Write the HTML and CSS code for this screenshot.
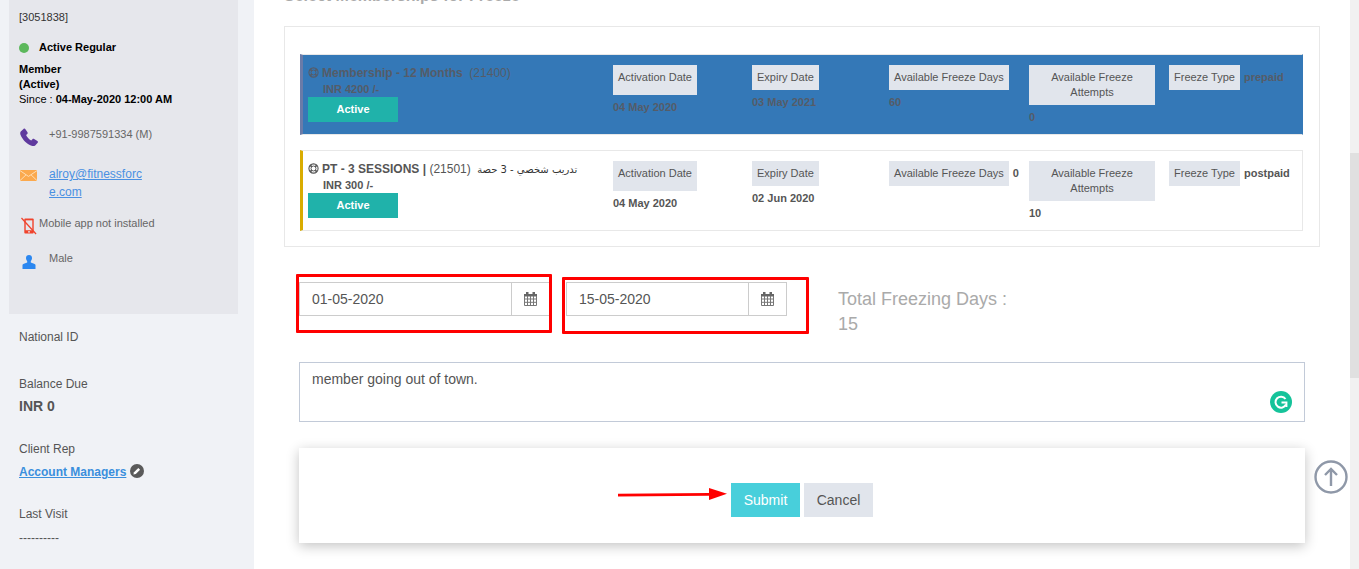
FILE: index.html
```html
<!DOCTYPE html>
<html lang="en">
<head>
<meta charset="utf-8">
<title>Freeze Membership</title>
<link rel="stylesheet" href="styles.css">
</head>
<body>
<div class="page">
  <aside class="sidebar">
    <div class="profile">
      <div class="member-id">[3051838]</div>
      <div class="status"><span class="dot"></span><b>Active Regular</b></div>
      <div class="member-type"><b>Member<br>(Active)</b><br>Since : <b>04-May-2020 12:00 AM</b></div>
      <div class="contact phone">
        <svg class="ic" viewBox="0 0 20 20"><path fill="#5f3a9e" d="M.8 3.800 3.700 1c.7-.6 1.500-.5 2 .2l2.200 3.200c.4.600.3 1.300-.2 1.800L6.400 7.400c.9 2.200 3 4.500 5.400 5.700l1.300-1.300c.5-.5 1.200-.5 1.800-.2l3.400 2c.7.500.8 1.300.3 1.900l-2.600 2.800c-.9.800-2.300 1-3.800.4C6.900 16.800 2.600 12 .6 7.300.1 6 .1 4.600.8 3.800z"/></svg>
        <span>+91-9987591334 (M)</span>
      </div>
      <div class="contact mail">
        <svg class="ic" viewBox="0 0 17 11"><rect width="17" height="11" fill="#fba94e"/><path fill="none" stroke="#ffe3bf" stroke-width=".9" d="M0 .6 8.500 6.400 17 .6M0 10.600 6 4.800M17 10.600 11 4.800"/></svg>
        <a href="#">alroy@fitnessforc<br>e.com</a>
      </div>
      <div class="contact app">
        <svg class="ic-app" viewBox="0 0 17 18"><rect x="3.500" y="1" width="10" height="16" rx="1" fill="#f0432c"/><rect x="5" y="3" width="7" height="10.500" fill="#e6e7ec"/><circle cx="8.500" cy="15.200" r="1" fill="#e6e7ec"/><path stroke="#f0432c" stroke-width="1.300" d="M.5.500 16 17.500"/></svg>
        <span>Mobile app not installed</span>
      </div>
      <div class="contact gender">
        <svg class="ic" viewBox="0 0 14 14"><path fill="#2b87f0" d="M7 0c1.900 0 3 1.300 3 3.100 0 1.300-.6 2.400-1.200 3.100v1.300c1.400.6 4 1.100 4.700 2.200V14H.5V9.700c.7-1.100 3.300-1.600 4.700-2.200V6.200C4.600 5.500 4 4.400 4 3.100 4 1.300 5.100 0 7 0z"/></svg>
        <span>Male</span>
      </div>
    </div>
    <div class="side-info">
      <div class="info national">National ID</div>
      <div class="info balance">Balance Due</div>
      <div class="amount">INR 0</div>
      <div class="info rep">Client Rep</div>
      <div class="managers"><a href="#">Account Managers</a>
        <svg class="edit" viewBox="0 0 14 14"><circle cx="7" cy="7" r="7" fill="#5a5a5a"/><path fill="#fff" d="M3.400 10.600l.6-2.400 4.300-4.300 1.800 1.800-4.300 4.300z"/></svg>
      </div>
      <div class="info visit">Last Visit</div>
      <div class="dashes">----------</div>
    </div>
  </aside>

  <main class="main">
    <h2 class="title">Select Memberships for Freeze</h2>
    <section class="panel">
      <article class="row selected">
        <div class="plan">
          <div class="plan-name"><svg class="buoy" viewBox="0 0 12 12"><circle cx="6" cy="6" r="5" fill="none" stroke="currentColor" stroke-width="1.200"/><circle cx="6" cy="6" r="2.700" fill="none" stroke="currentColor"/><path stroke="currentColor" stroke-width="1.800" d="M2.300 2.300l1.900 1.900M9.700 2.300 7.800 4.200M2.300 9.700l1.900-1.900M9.700 9.700 7.800 7.800"/></svg><b>Membership - 12 Months</b>&nbsp; <span class="code">(21400)</span></div>
          <div class="price">INR 4200 /-</div>
          <div class="badge">Active</div>
        </div>
        <div><span class="tag tall">Activation Date</span><div class="val">04 May 2020</div></div>
        <div><span class="tag">Expiry Date</span><div class="val">03 May 2021</div></div>
        <div><span class="tag">Available Freeze Days</span><div class="val">60</div></div>
        <div><span class="tag wide">Available Freeze Attempts</span><div class="val">0</div></div>
        <div class="inline"><span class="tag">Freeze Type</span><span class="val-in">prepaid</span></div>
      </article>
      <article class="row">
        <div class="plan">
          <div class="plan-name"><svg class="buoy" viewBox="0 0 12 12"><circle cx="6" cy="6" r="5" fill="none" stroke="currentColor" stroke-width="1.200"/><circle cx="6" cy="6" r="2.700" fill="none" stroke="currentColor"/><path stroke="currentColor" stroke-width="1.800" d="M2.300 2.300l1.900 1.900M9.700 2.300 7.800 4.200M2.300 9.700l1.900-1.900M9.700 9.700 7.800 7.800"/></svg><b>PT - 3 SESSIONS |</b> <span class="code">(21501)</span> <span class="arabic" dir="rtl">تدريب شخصي - 3 حصة</span></div>
          <div class="price">INR 300 /-</div>
          <div class="badge">Active</div>
        </div>
        <div><span class="tag tall">Activation Date</span><div class="val">04 May 2020</div></div>
        <div><span class="tag">Expiry Date</span><div class="val">02 Jun 2020</div></div>
        <div class="inline"><span class="tag">Available Freeze Days</span><span class="val-in">0</span></div>
        <div><span class="tag wide">Available Freeze Attempts</span><div class="val">10</div></div>
        <div class="inline"><span class="tag">Freeze Type</span><span class="val-in">postpaid</span></div>
      </article>
    </section>

    <section class="dates">
      <div class="date-box first">
        <div class="date-field"><span class="date-value">01-05-2020</span><span class="addon"><svg class="cal" viewBox="0 0 13 14"><path fill="#666" d="M2 0h2.500v3H2zM8.500 0H11v3H8.500z"/><rect y="2" width="13" height="2.500" fill="#666"/><path fill="none" stroke="#777" d="M.5 4v9.500h12V4M.5 7h12M.5 10.300h12M3.500 4v9.500M6.500 4v9.500M9.500 4v9.500"/></svg></span></div>
      </div>
      <div class="date-box second">
        <div class="date-field"><span class="date-value">15-05-2020</span><span class="addon"><svg class="cal" viewBox="0 0 13 14"><path fill="#666" d="M2 0h2.500v3H2zM8.500 0H11v3H8.500z"/><rect y="2" width="13" height="2.500" fill="#666"/><path fill="none" stroke="#777" d="M.5 4v9.500h12V4M.5 7h12M.5 10.300h12M3.500 4v9.500M6.500 4v9.500M9.500 4v9.500"/></svg></span></div>
      </div>
      <div class="total">Total Freezing Days :<br>15</div>
    </section>

    <div class="note">member going out of town.
      <svg class="grammarly" viewBox="0 0 22 22"><circle cx="11" cy="11" r="11" fill="#15c39a"/><path fill="none" stroke="#fff" stroke-width="2" d="M15.500 8A5.500 5.500 0 1 0 16 13.500"/><path fill="none" stroke="#fff" stroke-width="1.800" d="M11.500 11.500H16.500V16"/></svg>
    </div>

    <div class="actions">
      <svg class="arrow" viewBox="0 0 109 12"><path stroke="#f00" stroke-width="2.800" d="M0 7.200 91 6.400"/><path fill="#f00" d="M91 0l18 5.800L91 12z"/></svg>
      <button class="btn submit" type="button">Submit</button>
      <button class="btn cancel" type="button">Cancel</button>
      <svg class="to-top" viewBox="0 0 34 34"><circle cx="17" cy="17" r="15.500" fill="#fff" stroke="#8f98a8" stroke-width="2.400"/><path fill="none" stroke="#8f98a8" stroke-width="2.400" d="M17 26V9M11 15l6-6 6 6"/></svg>
    </div>
  </main>
  <div class="scrollbar"><div class="thumb"></div></div>
</div>
</body>
</html>
```
FILE: styles.css
```css
* { box-sizing: border-box; }
html, body { margin: 0; height: 100%; overflow: hidden; }
body { font-family: "Liberation Sans", Arial, sans-serif; color: #555; background: #fff; }
a { color: #3a8fdd; }

.page { display: flex; height: 569px; width: 1359px; overflow: hidden; }

/* Sidebar */
.sidebar { flex: 0 0 254px; background: #f0f2f6; padding-left: 9px; font-size: 12px; }
.profile { width: 229px; height: 314px; background: #e6e7ec; padding: 11px 10px 0; color: #000; font-size: 11px; }
.member-id { line-height: 13px; color: #333; }
.status { display: flex; align-items: center; margin-top: 16px; line-height: 15px; }
.dot { flex: none; width: 10px; height: 10px; border-radius: 50%; background: #5cb85c; margin-right: 10px; }
.member-type { margin-top: 7px; line-height: 15px; }
.contact { display: flex; color: #666; position: relative; }
.contact span, .contact a { display: block; }
.ic { flex: none; width: 20px; height: 20px; margin-right: 10px; }
.phone { margin-top: 20px; height: 37px; line-height: 15px; }
.phone .ic { margin-top: 1px; width: 19px; height: 19px; margin-left: 1px; }
.mail { height: 49px; margin-top: 1px; line-height: 18px; font-size: 12px; }
.mail .ic { width: 17px; height: 11px; margin: 5px 12px 0 1px; }
.mail a { color: #4a90e2; }
.app { margin-top: 2px; height: 34px; line-height: 15px; }
.ic-app { flex: none; width: 16px; height: 18px; margin: 1px 2px 0 2px; }
.gender { line-height: 15px; margin-top: 1px; }
.gender .ic { width: 14px; height: 14px; margin: 4px 13px 0 3px; }

.side-info { padding: 15px 10px 0; }
.info { line-height: 16px; color: #555; }
.balance { margin-top: 31px; }
.amount { font-size: 14px; font-weight: 700; line-height: 16px; margin-top: 6px; color: #555; }
.rep { margin-top: 27px; }
.managers { display: flex; align-items: center; margin-top: 7px; line-height: 16px; font-weight: 700; }
.managers a { color: #3a8fdd; }
.edit { width: 14px; height: 14px; margin: -3px 0 0 4px; }
.visit { margin-top: 26px; }
.dashes { margin-top: 8px; line-height: 16px; }

/* Main */
.main { flex: 1; min-width: 0; padding: 0 0 0 30px; position: relative; }
.title { margin: -13px 0 0; font-size: 16px; line-height: 18px; font-weight: 700; color: #aaa; }
.panel { width: 1036px; height: 221px; margin-top: 21px; border: 1px solid #e8e8e8; padding: 27px 16px 0 15px; }
.row { display: grid; grid-template-columns: 305px 139px 137px 140px 140px 1fr; height: 81px; padding: 10px 0 0 5px; border: 1px solid #e8e8e8; border-left: 3px solid #d9ac00; font-size: 11px; margin-bottom: 15px; line-height: 15px; color: #555; }
.row.selected { background: #3478b7; border-color: #e8e8e8 #3478b7 #e8e8e8 #6a7ba8; color: #555c68; }
.plan-name { height: 16px; white-space: pre; font-size: 12px; line-height: 16px; }
.buoy { display: inline-block; width: 11px; height: 11px; margin-right: 3px; vertical-align: -1px; }
.arabic { font-family: "DejaVu Sans", sans-serif; font-size: 10px; line-height: 1; margin-left: 3px; color: #333; }
.price { font-weight: 700; padding-left: 15px; line-height: 16px; }
.badge { width: 90px; height: 25px; background: #20b2aa; color: #fff; font-weight: 700; text-align: center; line-height: 24px; }
.tag { display: inline-block; background: #e1e5ec; padding: 5px; line-height: 15px; text-align: center; color: #555; vertical-align: top; }
.tag.tall { height: 30px; }
.tag.wide { width: 126px; }
.val { font-weight: 700; margin-top: 5px; }
.inline { display: flex; align-items: flex-start; }
.val-in { font-weight: 700; margin: 5px 0 0 4px; }

.dates { display: flex; height: 88px; margin: 27px 0 0 12px; position: relative; align-items: flex-start; }
.date-box { height: 59px; border: 3px solid #f00; border-radius: 1px; }
.date-box.first { width: 256px; padding: 5px 0 0 0; overflow: hidden; }
.date-box.second { width: 247px; margin: 3px 0 0 10px; padding: 2px 0 0 1px; height: 57px; }
.date-field { display: flex; height: 34px; border: 1px solid #ccc; font-size: 14px; line-height: 32px; color: #555; }
.first .date-field { width: 262px; }
.second .date-field { width: 221px; }
.date-value { flex: 1; padding-left: 12px; }
.addon { width: 38px; flex: none; border-left: 1px solid #ccc; display: flex; align-items: center; justify-content: center; }
.first .addon { margin-right: 11px; }
.cal { width: 13px; height: 14px; }
.total { font-size: 18px; line-height: 25px; color: #aaa; margin: 13px 0 0 29px; }

.note { position: relative; width: 1006px; height: 60px; margin-left: 15px; border: 1px solid #c2cad8; padding: 7px 12px; font-size: 14px; line-height: 18px; color: #555; }
.grammarly { position: absolute; right: 12px; bottom: 8px; width: 22px; height: 22px; }

.actions { position: relative; display: flex; align-items: center; justify-content: flex-start; width: 1006px; height: 95px; margin: 26px 0 0 15px; padding: 9px 0 0 319px; background: #fff; box-shadow: 0 3px 12px rgba(0,0,0,.24); }
.arrow { width: 109px; height: 12px; margin: 0 4px 12px 0; flex: none; }
.btn { border: 0; height: 34px; font: 14px "Liberation Sans", Arial, sans-serif; padding: 0; }
.submit { width: 69px; background: #48cfdb; color: #fff; margin-right: 4px; }
.cancel { width: 69px; background: #e1e5ec; color: #555; }
.to-top { position: absolute; left: 1015px; top: 12px; width: 34px; height: 34px; }

.scrollbar { flex: 0 0 9px; background: #f1f1f1; position: relative; }
.thumb { position: absolute; left: 0; right: 0; top: 153px; height: 225px; background: #e0e0e0; }
```
